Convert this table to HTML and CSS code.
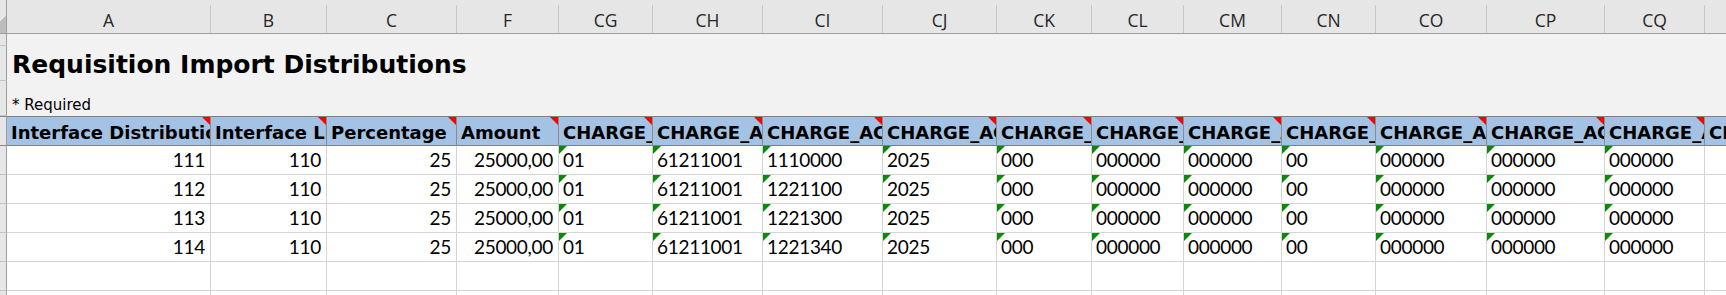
FILE: index.html
```html
<!DOCTYPE html>
<html lang="en">
  <head>
    <meta charset="UTF-8" />
    <meta name="viewport" content="width=device-width, initial-scale=1.0" />
    <title>Requisition Import Distributions</title>
    <link rel="stylesheet" href="styles.css">
  </head>
  <body>
    <div class="sheet">
      <div class="row col-heads">
        <div class="corner"></div>
        <div class="col-head">A</div>
        <div class="col-head">B</div>
        <div class="col-head">C</div>
        <div class="col-head">F</div>
        <div class="col-head">CG</div>
        <div class="col-head">CH</div>
        <div class="col-head">CI</div>
        <div class="col-head">CJ</div>
        <div class="col-head">CK</div>
        <div class="col-head">CL</div>
        <div class="col-head">CM</div>
        <div class="col-head">CN</div>
        <div class="col-head">CO</div>
        <div class="col-head">CP</div>
        <div class="col-head">CQ</div>
        <div class="col-head">CR</div>
      </div>

      <div class="row spacer-row">
        <div class="row-head"></div>
        <div class="band"></div>
      </div>
      <div class="row title-row">
        <div class="row-head"></div>
        <div class="band"><h1 class="title">Requisition Import Distributions</h1></div>
      </div>
      <div class="row note-row">
        <div class="row-head"></div>
        <div class="band"><span class="note">* Required</span></div>
      </div>

      <div class="row header-row">
        <div class="row-head"></div>
        <div class="hcell">Interface Distribution Number</div>
        <div class="hcell">Interface Line Number</div>
        <div class="hcell">Percentage</div>
        <div class="hcell">Amount</div>
        <div class="hcell">CHARGE_ACCOUNT_SEGMENT1</div>
        <div class="hcell">CHARGE_ACCOUNT_SEGMENT2</div>
        <div class="hcell">CHARGE_ACCOUNT_SEGMENT3</div>
        <div class="hcell">CHARGE_ACCOUNT_SEGMENT4</div>
        <div class="hcell">CHARGE_ACCOUNT_SEGMENT5</div>
        <div class="hcell">CHARGE_ACCOUNT_SEGMENT6</div>
        <div class="hcell">CHARGE_ACCOUNT_SEGMENT7</div>
        <div class="hcell">CHARGE_ACCOUNT_SEGMENT8</div>
        <div class="hcell">CHARGE_ACCOUNT_SEGMENT9</div>
        <div class="hcell">CHARGE_ACCOUNT_SEGMENT10</div>
        <div class="hcell">CHARGE_ACCOUNT_SEGMENT11</div>
        <div class="hcell">CHARGE_ACCOUNT_SEGMENT12</div>
      </div>

      <div class="row data-row">
        <div class="row-head"></div>
        <div class="cell num">111</div>
        <div class="cell num">110</div>
        <div class="cell num">25</div>
        <div class="cell num">25000,00</div>
        <div class="cell txt">01</div>
        <div class="cell txt">61211001</div>
        <div class="cell txt">1110000</div>
        <div class="cell txt">2025</div>
        <div class="cell txt">000</div>
        <div class="cell txt">000000</div>
        <div class="cell txt">000000</div>
        <div class="cell txt">00</div>
        <div class="cell txt">000000</div>
        <div class="cell txt">000000</div>
        <div class="cell txt">000000</div>
        <div class="cell"></div>
      </div>
      <div class="row data-row">
        <div class="row-head"></div>
        <div class="cell num">112</div>
        <div class="cell num">110</div>
        <div class="cell num">25</div>
        <div class="cell num">25000,00</div>
        <div class="cell txt">01</div>
        <div class="cell txt">61211001</div>
        <div class="cell txt">1221100</div>
        <div class="cell txt">2025</div>
        <div class="cell txt">000</div>
        <div class="cell txt">000000</div>
        <div class="cell txt">000000</div>
        <div class="cell txt">00</div>
        <div class="cell txt">000000</div>
        <div class="cell txt">000000</div>
        <div class="cell txt">000000</div>
        <div class="cell"></div>
      </div>
      <div class="row data-row">
        <div class="row-head"></div>
        <div class="cell num">113</div>
        <div class="cell num">110</div>
        <div class="cell num">25</div>
        <div class="cell num">25000,00</div>
        <div class="cell txt">01</div>
        <div class="cell txt">61211001</div>
        <div class="cell txt">1221300</div>
        <div class="cell txt">2025</div>
        <div class="cell txt">000</div>
        <div class="cell txt">000000</div>
        <div class="cell txt">000000</div>
        <div class="cell txt">00</div>
        <div class="cell txt">000000</div>
        <div class="cell txt">000000</div>
        <div class="cell txt">000000</div>
        <div class="cell"></div>
      </div>
      <div class="row data-row">
        <div class="row-head"></div>
        <div class="cell num">114</div>
        <div class="cell num">110</div>
        <div class="cell num">25</div>
        <div class="cell num">25000,00</div>
        <div class="cell txt">01</div>
        <div class="cell txt">61211001</div>
        <div class="cell txt">1221340</div>
        <div class="cell txt">2025</div>
        <div class="cell txt">000</div>
        <div class="cell txt">000000</div>
        <div class="cell txt">000000</div>
        <div class="cell txt">00</div>
        <div class="cell txt">000000</div>
        <div class="cell txt">000000</div>
        <div class="cell txt">000000</div>
        <div class="cell"></div>
      </div>
      <div class="row data-row">
        <div class="row-head"></div>
        <div class="cell"></div><div class="cell"></div><div class="cell"></div><div class="cell"></div>
        <div class="cell"></div><div class="cell"></div><div class="cell"></div><div class="cell"></div>
        <div class="cell"></div><div class="cell"></div><div class="cell"></div><div class="cell"></div>
        <div class="cell"></div><div class="cell"></div><div class="cell"></div><div class="cell"></div>
      </div>
      <div class="row data-row">
        <div class="row-head"></div>
        <div class="cell"></div><div class="cell"></div><div class="cell"></div><div class="cell"></div>
        <div class="cell"></div><div class="cell"></div><div class="cell"></div><div class="cell"></div>
        <div class="cell"></div><div class="cell"></div><div class="cell"></div><div class="cell"></div>
        <div class="cell"></div><div class="cell"></div><div class="cell"></div><div class="cell"></div>
      </div>
    </div>
  </body>
</html>
```

FILE: styles.css
```css
* {
  margin: 0;
  padding: 0;
  box-sizing: border-box;
}

body {
  background-color: #fff;
  color: #000;
  overflow: hidden;
  font-family: "Lato", "Liberation Sans", sans-serif;
}

.sheet {
  width: max-content;
}

.row {
  display: grid;
  grid-template-columns: 7px 204px 116px 130px 102px 94px 110px 120px 114px 95px 92px 98px 94px 111px 118px 100px 100px;
}

/* column letters */
.col-heads {
  height: 34px;
  padding-top: 5px;
  background-color: #e6e6e6;
  border-bottom: 1px solid #9e9e9e;
}

.corner {
  margin-top: -5px;
  border-right: 1px solid #9e9e9e;
  background: linear-gradient(135deg, transparent 55%, #bdbdbd 55%);
}

.col-head {
  display: flex;
  align-items: flex-end;
  justify-content: center;
  padding-bottom: 1px;
  border-right: 1px solid #c8c8c8;
  font-family: "Open Sans", "Noto Sans", sans-serif;
  font-size: 17.5px;
  color: #262626;
}

/* row headings on the left */
.row-head {
  background-color: #e6e6e6;
  border-right: 1px solid #9e9e9e;
  border-bottom: 1px solid #c4c4c4;
}

/* title area */
.spacer-row {
  height: 12px;
}

.title-row {
  height: 35px;
}

.note-row {
  height: 35px;
}

.band {
  grid-column: 2 / -1;
  display: flex;
  align-items: flex-end;
  padding-left: 5px;
  background-color: #f2f2f2;
}

.title {
  font-family: "DejaVu Sans", sans-serif;
  font-size: 25px;
  font-weight: bold;
  padding-bottom: 2px;
}

.note {
  font-family: "DejaVu Sans", sans-serif;
  font-size: 15px;
  padding-bottom: 2px;
}

/* blue header row */
.header-row {
  height: 30px;
}

.header-row .row-head {
  border-top: 1px solid #8a8a8a;
  border-bottom: 1px solid #8a8a8a;
}

.hcell {
  position: relative;
  display: flex;
  align-items: flex-end;
  padding-left: 4px;
  padding-bottom: 2px;
  overflow: hidden;
  white-space: nowrap;
  background-color: #a4c2e3;
  border-top: 1px solid #808080;
  border-bottom: 1px solid #808080;
  border-right: 1px solid #8c8c8c;
  font-family: "DejaVu Sans", sans-serif;
  font-size: 18px;
  font-weight: bold;
}

.hcell::after {
  content: "";
  position: absolute;
  top: 0;
  right: 0;
  width: 8px;
  height: 8px;
  background-color: #ff0000;
  clip-path: polygon(0 0, 100% 0, 100% 100%);
}

/* data cells */
.data-row {
  height: 29px;
}

.cell {
  position: relative;
  display: flex;
  align-items: flex-end;
  padding: 0 4px 3px;
  overflow: hidden;
  white-space: nowrap;
  border-right: 1px solid #d4d4d4;
  border-bottom: 1px solid #d4d4d4;
  font-size: 19px;
  letter-spacing: -0.3px;
}

.cell.num {
  justify-content: flex-end;
  padding-right: 5px;
}

.cell.txt::before {
  content: "";
  position: absolute;
  top: 0;
  left: 0;
  width: 8px;
  height: 8px;
  background-color: #0a8a0a;
  clip-path: polygon(0 0, 100% 0, 0 100%);
}
```
